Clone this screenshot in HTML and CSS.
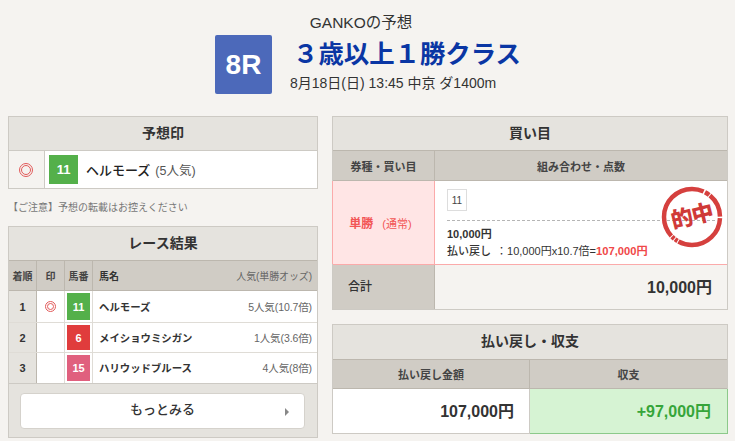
FILE: index.html
```html
<!DOCTYPE html>
<html lang="ja">
<head>
<meta charset="utf-8">
<title>GANKOの予想</title>
<link rel="stylesheet" href="styles.css">
</head>
<body>
<header class="head">
  <div class="head-by">GANKOの予想</div>
  <div class="head-race">
    <div class="race-no">8R</div>
    <div class="race-info">
      <div class="race-name">３歳以上１勝クラス</div>
      <div class="race-meta">8月18日(日) 13:45 中京 ダ1400m</div>
    </div>
  </div>
</header>
<main class="cols">
  <section class="col-left">
    <div class="box">
      <h2 class="box-title">予想印</h2>
      <div class="mark-row">
        <div class="mark-cell"><span class="dbl dbl-lg"></span></div>
        <div class="mark-body"><span class="num green num-lg">11</span><span class="mark-name">ヘルモーズ</span><span class="mark-pop">(5人気)</span></div>
      </div>
    </div>
    <p class="note">【ご注意】予想の転載はお控えください</p>
    <div class="box box-result">
      <h2 class="box-title">レース結果</h2>
      <div class="res-row res-head">
        <div class="rc">着順</div><div class="rc">印</div><div class="rc">馬番</div>
        <div class="rc rc-name">馬名</div><div class="rc-pop">人気(単勝オッズ)</div>
      </div>
      <div class="res-row res-a">
        <div class="rc rank">1</div><div class="rc w"><span class="dbl"></span></div><div class="rc w pad"><span class="num green">11</span></div>
        <div class="rc rc-name w">ヘルモーズ</div><div class="rc-pop w">5人気(10.7倍)</div>
      </div>
      <div class="res-row res-b">
        <div class="rc rank">2</div><div class="rc w"></div><div class="rc w pad"><span class="num red">6</span></div>
        <div class="rc rc-name w">メイショウミシガン</div><div class="rc-pop w">1人気(3.6倍)</div>
      </div>
      <div class="res-row res-c">
        <div class="rc rank">3</div><div class="rc w"></div><div class="rc w pad"><span class="num pink">15</span></div>
        <div class="rc rc-name w">ハリウッドブルース</div><div class="rc-pop w">4人気(8倍)</div>
      </div>
      <div class="more-wrap"><a class="more">もっとみる<span class="arrow"></span></a></div>
    </div>
  </section>
  <section class="col-right">
    <div class="box">
      <h2 class="box-title">買い目</h2>
      <div class="buy-grid buy-head"><div class="bh">券種・買い目</div><div class="bh">組み合わせ・点数</div></div>
      <div class="buy-grid buy-main">
        <div class="buy-type"><b>単勝</b><span>(通常)</span></div>
        <div class="buy-body">
          <div class="buy-top"><span class="chip">11</span></div>
          <div class="buy-amt">10,000円</div>
          <div class="buy-pay"><b>払い戻し</b> ：10,000円x10.7倍=<em>107,000円</em></div>
          <div class="stamp">
            <svg class="stamp-ring" viewBox="0 0 62 62" aria-hidden="true">
              <circle cx="31" cy="31" r="28" fill="none" stroke="#d5403e" stroke-width="4.5" stroke-dasharray="12 1.5 5 1 24 1.5 57 1 3 1 3 1 66 0"/>
            </svg>
            <span>的中</span>
          </div>
        </div>
      </div>
      <div class="buy-grid buy-total"><div class="total-l">合計</div><div class="total-r">10,000円</div></div>
    </div>
    <div class="box box-pay">
      <h2 class="box-title">払い戻し・収支</h2>
      <div class="pay-grid pay-head"><div class="bh">払い戻し金額</div><div class="bh">収支</div></div>
      <div class="pay-grid pay-body"><div class="pay-v">107,000円</div><div class="pay-v plus">+97,000円</div></div>
    </div>
  </section>
</main>
</body>
</html>
```
FILE: styles.css
```css
* { box-sizing: border-box; }
html, body { margin: 0; height: 441px; overflow: hidden; }
body {
  background: #f5f3f0;
  color: #333;
  font-family: "Liberation Sans", "Noto Sans CJK JP", sans-serif;
  font-size: 12px;
}
.head { height: 116px; padding-top: 12px; }
.head-by { text-align: center; font-size: 15.5px; line-height: 21px; margin-left: -13px; height: 23px; }
.head-race { display: flex; justify-content: center; margin-left: 1px; }
.race-no {
  width: 57px; height: 59px; background: #4c69ba; color: #fff; border-radius: 2px;
  font-size: 28px; font-weight: bold; display: flex; align-items: center; justify-content: center;
}
.race-info { margin-left: 18px; }
.race-name { color: #0a36a4; font-size: 25.4px; font-weight: bold; line-height: 39px; height: 39px; padding-left: 3px; white-space: nowrap; }
.race-meta { font-size: 14px; line-height: 18px; }
.cols { display: flex; gap: 14px; padding: 0 7px 0 8px; align-items: flex-start; }
.col-left { width: 310px; }
.col-right { width: 396px; }
.box { border: 1px solid #cdcac4; background: #f5f3f0; }
.box-title {
  margin: 0; height: 33px; background: #e5e3de; text-align: center;
  font-size: 14px; font-weight: bold; line-height: 32px; color: #333;
}
.mark-row { display: flex; height: 38px; border-top: 1px solid #cdcac4; }
.mark-cell { width: 36px; border-right: 1px solid #cdcac4; display: flex; align-items: center; justify-content: center; padding-right: 1px; }
.mark-body { flex: 1; background: #fff; display: flex; align-items: center; padding-left: 4px; }
.dbl { display: inline-block; width: 11px; height: 11px; border: 1px solid #e25a5a; border-radius: 50%; position: relative; }
.dbl::after { content: ""; position: absolute; inset: 1px; border: 1px solid #e25a5a; border-radius: 50%; }
.dbl-lg { width: 14px; height: 14px; }
.num { display: flex; align-items: center; justify-content: center; color: #fff; font-weight: bold; font-size: 11px; width: 100%; height: 100%; }
.num-lg { width: 29px; height: 29px; flex: none; font-size: 13px; }
.green { background: #54b04a; }
.red { background: #e03c3c; }
.pink { background: #e0607e; }
.mark-name { margin-left: 8px; font-size: 13px; font-weight: 500; color: #222; }
.mark-pop { margin-left: 5px; font-size: 12.5px; color: #555; }
.note { margin: 0; height: 37px; padding-top: 12px; font-size: 10px; line-height: 14px; color: #777; }
.box-result { background: #e5e3de; height: 212px; }
.res-row { display: grid; grid-template-columns: 28px 28px 28px 1fr auto; }
.res-head { height: 31px; background: #d0ccc5; border-top: 1px solid #bcb7ae; border-bottom: 1px solid #bcb7ae; font-size: 10px; font-weight: bold; color: #444; }
.rc { display: flex; align-items: center; justify-content: center; border-right: 1px solid #bcb7ae; }
.rc-name { justify-content: flex-start; padding-left: 6px; border-right: 0; font-weight: bold; color: #333; }
.rc-pop { display: flex; align-items: center; justify-content: flex-end; padding-right: 5px; font-size: 10.5px; color: #666; font-weight: normal; letter-spacing: -0.1px; }
.res-head .rc-pop { font-size: 10px; letter-spacing: -0.1px; }
.res-a, .res-b, .res-c { font-size: 10.4px; background: #fff; border-bottom: 1px solid #dfdcd6; }
.res-a { height: 32px; }
.res-b { height: 30px; }
.res-c { height: 31px; border-bottom: 1px solid #cdcac4; }
.rank { background: #e5e3de; font-weight: bold; font-size: 11px; border-right-color: #bcb7ae; }
.w { background: #fff; border-right-color: #dfdcd6; }
.rc-name.w, .rc-pop.w { background: #fff; padding-bottom: 1px; }
.pad { padding: 2px; }
.more-wrap { padding: 9px 12px 0 11px; }
.more {
  display: block; position: relative; height: 36px; background: #fff; border: 1px solid #d5d2cc; border-radius: 4px;
  text-align: center; font-size: 13px; font-weight: 500; line-height: 32px; color: #333;
}
.arrow { position: absolute; right: 15px; top: 14px; border-left: 4px solid #888; border-top: 4px solid transparent; border-bottom: 4px solid transparent; }
.buy-grid { display: grid; grid-template-columns: 102px 1fr; }
.buy-head { height: 31px; }
.bh { background: #d0ccc5; display: flex; align-items: center; justify-content: center; font-size: 11px; font-weight: bold; color: #444; border-top: 1px solid #bcb7ae; border-bottom: 1px solid #bcb7ae; }
.buy-head .bh:first-child, .pay-head .bh:first-child { border-right: 1px solid #bcb7ae; }
.buy-main { height: 84px; border-bottom: 1px solid #fbaaaa; }
.buy-type { background: #ffe5e5; border-right: 1px solid #fbaaaa; border-left: 1px solid #fbaaaa; margin-left: -1px; color: #f25555; display: flex; align-items: center; justify-content: center; gap: 9px; font-size: 11px; padding-right: 6px; }
.buy-type b { font-size: 12px; }
.buy-body { background: #fff; position: relative; padding: 8px 12px 0; }
.buy-top { height: 32px; border-bottom: 1px dashed #b5b5b5; }
.chip { display: inline-flex; align-items: center; justify-content: center; width: 20px; height: 22px; border: 1px solid #ddd; font-size: 10px; color: #444; }
.buy-amt { font-size: 11px; font-weight: bold; line-height: 13px; margin-top: 7px; }
.buy-pay { font-size: 11px; font-weight: normal; line-height: 15px; margin-top: 3px; white-space: nowrap; }
.buy-pay b { font-weight: 500; margin-right: 2px; }
.buy-pay em { font-style: normal; color: #f04848; font-weight: bold; font-size: 11.2px; }
.stamp {
  position: absolute; right: 4px; top: 5px; width: 62px; height: 62px;
  display: flex; align-items: center; justify-content: center;
}
.stamp-ring { position: absolute; inset: 0; width: 62px; height: 62px; transform: rotate(-90deg); }
.stamp span { position: relative; color: #d03a38; font-size: 22px; font-weight: 900; line-height: 1; white-space: nowrap; letter-spacing: -1px; transform: rotate(-14deg); }
.buy-total { height: 44px; }
.total-l { background: #d0ccc5; border-right: 1px solid #bcb7ae; font-size: 12px; font-weight: 500; display: flex; align-items: center; padding: 0 0 3px 15px; }
.total-r { display: flex; align-items: center; justify-content: flex-end; padding: 0 15px 3px 0; font-size: 16px; font-weight: bold; color: #333; }
.box-pay { margin-top: 14px; }
.box-pay .box-title { height: 34px; }
.pay-grid { display: grid; grid-template-columns: 197px 1fr; }
.pay-head { height: 30px; }
.pay-body { height: 44px; }
.pay-v { background: #fff; display: flex; align-items: center; justify-content: flex-end; padding: 0 15px 3px 0; font-size: 16px; font-weight: bold; border-right: 1px solid #cdcac4; }
.plus { background: #d6f3d3; color: #36a53a; border: 1px solid #8cc98a; border-top: 0; border-left: 0; margin: 0 -1px -1px 0; padding-right: 16px; }
```
